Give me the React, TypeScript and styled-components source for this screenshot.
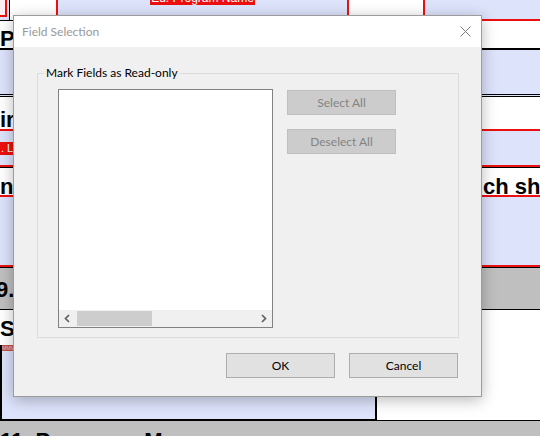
import React from "react";
import styled, { createGlobalStyle } from "styled-components";

const BLUE = "#dde3fb";
const RED = "#ec1010";
const GRAY = "#bfbfbf";

const GlobalStyle = createGlobalStyle`
  html, body { margin: 0; padding: 0; background: #fff; }
  body { font-family: "Liberation Sans", Arial, sans-serif; }
  * { box-sizing: border-box; }
`;

const Screen = styled.div`
  position: relative;
  width: 540px;
  height: 436px;
  overflow: hidden;
  background: #fff;
`;

const Sheet = styled.div`
  display: flex;
  flex-direction: column;
  width: 540px;
`;

/* ---------- top band of the form ---------- */
const TopBand = styled.div`
  display: flex;
  height: 21px;
  background: ${BLUE};
  overflow: hidden;
`;

const CornerCell = styled.div`
  width: 10px;
  height: 21px;
  border-right: 1px solid #000;
  border-bottom: 1px solid #000;
  background: ${BLUE};
`;

const RedBox = styled.div`
  width: 7px;
  height: 17px;
  background: #fbeef3;
  border-right: 2px solid ${RED};
  border-bottom: 2px solid ${RED};
`;

const NameCell = styled.div`
  width: 46px;
  height: 21px;
  background: #fff;
  border-bottom: 1px solid #000;
`;

const LabelCell = styled.div`
  width: 291px;
  height: 21px;
  display: flex;
  justify-content: center;
  align-items: flex-start;
  background: ${BLUE};
  border-left: 2px solid ${RED};
`;

const TopTag = styled.span`
  margin-top: -9px;
  padding: 0 1px;
  background: ${RED};
  color: #fff;
  font: 12px/14px "Liberation Sans", Arial, sans-serif;
  white-space: nowrap;
`;

const SlotCell = styled.div`
  width: 78px;
  height: 21px;
  background: #fff;
  border-left: 2px solid ${RED};
  border-right: 2px solid ${RED};
`;

const RightCell = styled.div`
  flex: 1;
  height: 21px;
  background: ${BLUE};
  border-bottom: 2px solid ${RED};
`;

/* ---------- generic bands ---------- */
const Band = styled.div<{ $bg: string; $h: number; $pt?: number; $bt?: string; $bb?: string }>`
  display: flex;
  align-items: flex-start;
  height: ${(p) => p.$h}px;
  padding-top: ${(p) => p.$pt ?? 0}px;
  background: ${(p) => p.$bg};
  border-top: ${(p) => p.$bt ?? "none"};
  border-bottom: ${(p) => p.$bb ?? "none"};
  overflow: hidden;
  white-space: nowrap;
`;

const BigText = styled.span<{ $shift?: number }>`
  margin-left: ${(p) => p.$shift ?? 0}px;
  font: bold 22px/1 "Liberation Sans", Arial, sans-serif;
  color: #000;
  white-space: nowrap;
`;

const Column = styled.div<{ $w: number }>`
  flex: 0 0 ${(p) => p.$w}px;
  display: flex;
`;

const FieldTag = styled.span`
  background: ${RED};
  color: #fff;
  font: 11px/13px "Liberation Sans", Arial, sans-serif;
  padding: 0 3px 0 1px;
`;

const BoxRow = styled.div`
  display: flex;
  align-items: flex-start;
  height: 76px;
`;

const FieldBox = styled.div`
  width: 377px;
  height: 76px;
  background: ${BLUE};
  border-left: 2px solid #000;
  border-right: 2px solid #000;
  border-bottom: 2px solid #000;
`;

const MiniTag = styled.span`
  display: block;
  width: 60px;
  height: 6px;
  background: #b9544c;
  color: #f2c6c0;
  font: 5px/6px "Liberation Sans", Arial, sans-serif;
  overflow: hidden;
`;

const WhiteFill = styled.div`
  flex: 1;
  height: 76px;
  background: #fff;
  border-bottom: 1px solid #000;
`;

/* ---------- dialog ---------- */
const Dialog = styled.div`
  position: absolute;
  left: 13px;
  top: 15px;
  width: 469px;
  height: 382px;
  display: flex;
  flex-direction: column;
  background: #f0f0f0;
  border: 1px solid #9c9c9c;
  box-shadow: 0 3px 14px rgba(0, 0, 0, 0.28);
  font-family: Lato, "Noto Sans", sans-serif;
  font-size: 12px;
  color: #000;
`;

const TitleBar = styled.div`
  height: 31px;
  flex: 0 0 31px;
  background: #fff;
  display: flex;
  align-items: center;
  justify-content: space-between;
  padding: 0 10px 0 8px;
`;

const Title = styled.span`
  color: #999;
  font-size: 12px;
`;

const DialogBody = styled.div`
  flex: 1;
  display: flex;
  flex-direction: column;
  gap: 15px;
  padding: 26px 22px 18px 23px;
`;

const GroupBox = styled.div`
  position: relative;
  height: 265px;
  border: 1px solid #dcdcdc;
  display: flex;
  align-items: flex-start;
  gap: 14px;
  padding: 15px 0 0 20px;
`;

const GroupLabel = styled.span`
  position: absolute;
  top: -9px;
  left: 6px;
  padding: 0 2px;
  background: #f0f0f0;
  line-height: 15px;
`;

const ListBox = styled.div`
  width: 215px;
  height: 239px;
  display: flex;
  flex-direction: column;
  justify-content: flex-end;
  background: #fff;
  border: 1px solid #828282;
`;

const HScroll = styled.div`
  height: 17px;
  display: flex;
  align-items: center;
  background: #f0f0f0;
`;

const ArrowBtn = styled.div`
  width: 17px;
  height: 17px;
  display: flex;
  align-items: center;
  justify-content: center;
`;

const Thumb = styled.div`
  width: 75px;
  height: 15px;
  margin-left: 1px;
  background: #cdcdcd;
`;

const Track = styled.div`
  flex: 1;
`;

const ButtonColumn = styled.div`
  display: flex;
  flex-direction: column;
  gap: 14px;
  margin-top: 1px;
`;

const Button = styled.button<{ $disabled?: boolean }>`
  width: 109px;
  height: 25px;
  padding: 0;
  font-family: Lato, "Noto Sans", sans-serif;
  font-size: 12px;
  background: ${(p) => (p.$disabled ? "#cccccc" : "#e1e1e1")};
  border: 1px solid ${(p) => (p.$disabled ? "#bfbfbf" : "#adadad")};
  color: ${(p) => (p.$disabled ? "#838383" : "#000")};
  border-radius: 0;
`;

const Footer = styled.div`
  display: flex;
  justify-content: flex-end;
  gap: 14px;
  padding-right: 1px;
`;

const Chevron = ({ dir }: { dir: "left" | "right" }) => (
  <svg width="17" height="17" viewBox="0 0 17 17">
    <polyline
      points={dir === "left" ? "10,5 6.5,8.5 10,12" : "7,5 10.5,8.5 7,12"}
      fill="none"
      stroke="#606060"
      strokeWidth="1.7"
    />
  </svg>
);

const CloseIcon = () => (
  <svg width="11" height="11" viewBox="0 0 11 11">
    <path d="M0.5 0.5 L10.5 10.5 M10.5 0.5 L0.5 10.5" stroke="#7d7d7d" strokeWidth="1" />
  </svg>
);

export default function App() {
  return (
    <>
      <GlobalStyle />
      <Screen>
        <Sheet>
          <TopBand>
            <CornerCell>
              <RedBox />
            </CornerCell>
            <NameCell />
            <LabelCell>
              <TopTag>Ed. Program Name</TopTag>
            </LabelCell>
            <SlotCell />
            <RightCell />
          </TopBand>

          <Band $bg="#fff" $h={29} $pt={7} $bb="2px solid #000">
            <BigText>Part</BigText>
          </Band>
          <Band $bg={BLUE} $h={47} $bb="3px double #000" />
          <Band $bg="#fff" $h={34} $pt={12} $bb={`2px solid ${RED}`}>
            <BigText>ir</BigText>
          </Band>
          <Band $bg={BLUE} $h={36} $pt={11} $bb={`2px solid ${RED}`}>
            <FieldTag>. L</FieldTag>
          </Band>
          <Band $bg="#fff" $h={30} $pt={8} $bt="1px solid #000" $bb={`2px solid ${RED}`}>
            <Column $w={483}>
              <BigText>n</BigText>
            </Column>
            <BigText>ch should</BigText>
          </Band>
          <Band $bg={BLUE} $h={70} $bb={`2px solid ${RED}`} />
          <Band $bg={GRAY} $h={43} $pt={11} $bt="1px solid #000" $bb="1px solid #000">
            <BigText $shift={-4}>9.</BigText>
          </Band>
          <Band $bg="#fff" $h={35} $pt={8}>
            <BigText>S</BigText>
          </Band>
          <BoxRow>
            <FieldBox>
              <MiniTag>MMMMMMMMMMMM</MiniTag>
            </FieldBox>
            <WhiteFill />
          </BoxRow>
          <Band $bg={GRAY} $h={20} $pt={9}>
            <BigText>11. Programs Ma</BigText>
          </Band>
        </Sheet>

        <Dialog>
          <TitleBar>
            <Title>Field Selection</Title>
            <CloseIcon />
          </TitleBar>
          <DialogBody>
            <GroupBox>
              <GroupLabel>Mark Fields as Read-only</GroupLabel>
              <ListBox>
                <HScroll>
                  <ArrowBtn>
                    <Chevron dir="left" />
                  </ArrowBtn>
                  <Thumb />
                  <Track />
                  <ArrowBtn>
                    <Chevron dir="right" />
                  </ArrowBtn>
                </HScroll>
              </ListBox>
              <ButtonColumn>
                <Button $disabled>Select All</Button>
                <Button $disabled>Deselect All</Button>
              </ButtonColumn>
            </GroupBox>
            <Footer>
              <Button>OK</Button>
              <Button>Cancel</Button>
            </Footer>
          </DialogBody>
        </Dialog>
      </Screen>
    </>
  );
}
